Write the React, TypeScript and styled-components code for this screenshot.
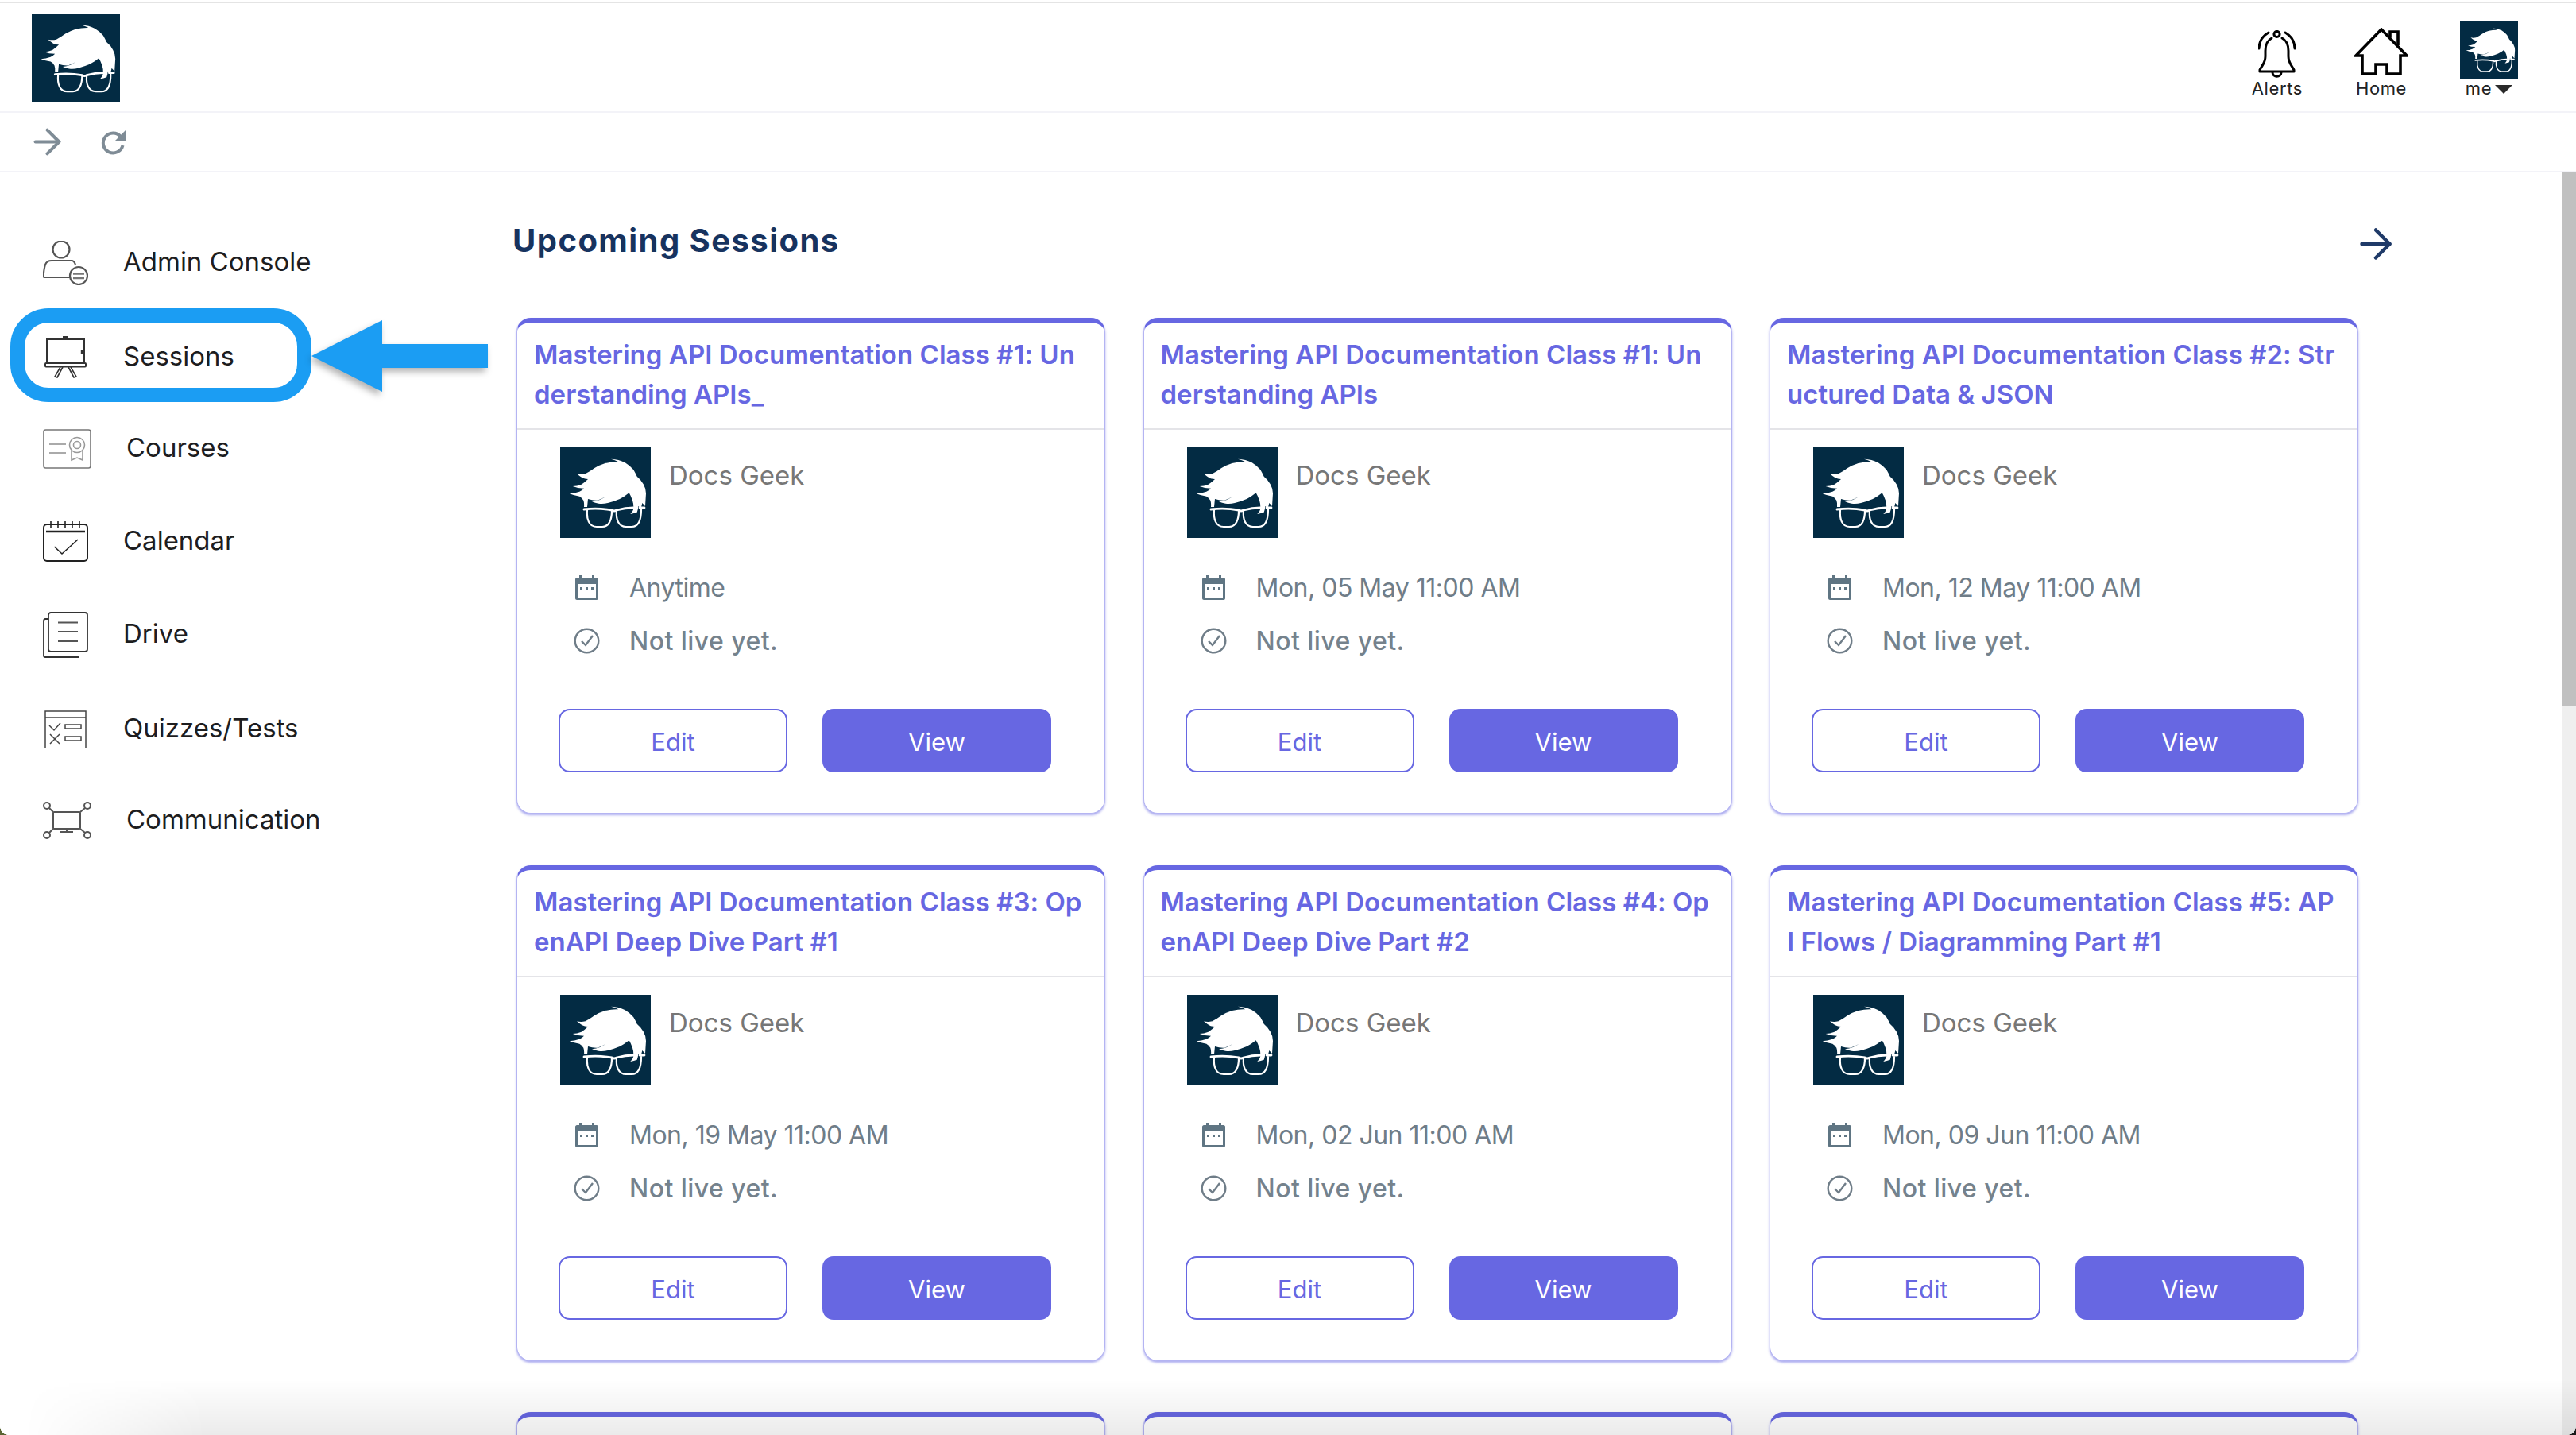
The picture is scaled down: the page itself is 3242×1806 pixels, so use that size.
import React from "react";
import styled, { createGlobalStyle } from "styled-components";
import { ArrowRight } from "lucide-react";

const GlobalStyle = createGlobalStyle`
  html, body {
    margin: 0;
    padding: 0;
    background: #fff;
  }
  * {
    box-sizing: border-box;
  }
`;

const sessions = [
  { title: "Mastering API Documentation Class #1: Understanding APIs_", when: "Anytime" },
  { title: "Mastering API Documentation Class #1: Understanding APIs", when: "Mon, 05 May 11:00 AM" },
  { title: "Mastering API Documentation Class #2: Structured Data & JSON", when: "Mon, 12 May 11:00 AM" },
  { title: "Mastering API Documentation Class #3: OpenAPI Deep Dive Part #1", when: "Mon, 19 May 11:00 AM" },
  { title: "Mastering API Documentation Class #4: OpenAPI Deep Dive Part #2", when: "Mon, 02 Jun 11:00 AM" },
  { title: "Mastering API Documentation Class #5: API Flows / Diagramming Part #1", when: "Mon, 09 Jun 11:00 AM" },
];

const LogoMark = ({ size, height }: { size: number; height?: number }) => (
  <svg width={size} height={height ?? size} viewBox="0 0 114 114" preserveAspectRatio="none" style={{ display: "block", flex: "none" }}>
    <rect width="114" height="114" fill="#032b43" />
    <path
      d="M64 14.7 Q74 15 81.7 19.3 Q88 23 92.3 28.3 Q95 33 96.7 36.7 Q102 41 105 46.7 Q108 52 108 58 L107 74 L103.3 70 L101.7 76.7 L98.3 74 Q98 79 96.7 81.7 Q93 83 88.3 84 Q92 80 92.3 76.7 Q92.5 71 91 66.7 Q89 61 86.7 57.3 Q81 62 75 65 Q68 68 60 70 Q54 71.5 48.3 70.7 Q44 70 40 68.3 Q45 68 50 66 Q54 64 57.7 61.7 Q52 65 46.7 66.7 Q41 67 35 65 L34 75 L30 75 Q30.5 70 29.3 66.7 Q27 63 24.3 61.7 Q18 61 11.7 58.3 Q18 58 24.3 55.7 Q28 54 30 51.7 Q22 51.5 15.7 49 Q21 49 26.7 46.7 Q31 44 35 40 Q31 40 27.7 38.3 Q24 36 21 33.3 Q26 34.5 31.7 33.3 Q38 30 43.3 26 Q50 22 56.7 20 Q65 18 73.3 18.3 Q69 16 64 14.7 Z"
      fill="#fff"
    />
    <g fill="none" stroke="#fff" strokeLinejoin="round" strokeLinecap="round">
      <path d="M30 78 Q48 76 65 79 Q68 81 71 79 Q82 76 92 76 M100 76 L106 76" strokeWidth="2.8" />
      <path d="M34 79 C33 90 36 100 46 100 H53 C62 100 65 90 65 80" strokeWidth="2.2" />
      <path d="M71 80 C70 90 73 100 83 100 H90 C99 100 102 90 102 78" strokeWidth="2.2" />
    </g>
  </svg>
);

const ReloadIcon = () => (
  <svg width="32" height="32" viewBox="0 0 32 32">
    <path d="M25 9 A12.5 12.5 0 1 0 27.5 20" fill="none" stroke="#7f8c96" strokeWidth="4" />
    <path d="M31 1 V15 H17 Z" fill="#7f8c96" />
  </svg>
);

const BellIcon = () => (
  <svg width="47" height="61" viewBox="0 0 47 61" fill="none" stroke="#000" strokeWidth="3" strokeLinecap="round" strokeLinejoin="round">
    <circle cx="23.5" cy="5" r="3.6" />
    <path d="M17 10 C11 13 9 19 9 26 V33 C9 41 5 44 2 50 V52 H45 V50 C42 44 38 41 38 33 V26 C38 19 36 13 30 10" />
    <path d="M18 53 C18 60 29 60 29 53" />
    <path d="M1 23 C1 14 6 7 13 3" />
    <path d="M46 23 C46 14 41 7 34 3" />
  </svg>
);

const HomeIcon = () => (
  <svg width="68" height="64" viewBox="0 0 68 64" fill="none" stroke="#000" strokeWidth="3.6" strokeLinejoin="miter">
    <path d="M10 35 H2 L34 2 L66 35 H58 V58 H41 V46 H27 V58 H10 Z" />
    <path d="M45 12 V5 H55 V22" />
  </svg>
);

const AdminIcon = () => (
  <svg width="57" height="56" viewBox="0 0 57 56" fill="none" stroke="#555" strokeWidth="2.2">
    <circle cx="23" cy="11" r="10.5" />
    <path d="M0.5 46 C1 38 2 33 3 30 C4 27 7 25 11 25 H36 C38 25 40 27 41 30 M34 46 H0.5" />
    <circle cx="45" cy="44" r="11" fill="#fff" />
    <path d="M38 41.5 H52 M38 47 H52" strokeWidth="2.4" stroke="#777" />
  </svg>
);

const BoardIcon = () => (
  <svg width="53" height="53" viewBox="0 0 53 53" fill="none" stroke="#333" strokeWidth="2">
    <path d="M24 4 V1 H29 V4" />
    <rect x="3" y="4" width="47" height="30" />
    <rect x="1" y="34" width="51" height="4.5" rx="1" fill="#fff" />
    <path d="M47 17 V23" strokeWidth="2.4" />
    <path d="M20 39 L13 51 L16 52 L23 39 M30 39 L37 52 L40 51 L33 39" strokeWidth="1.6" />
  </svg>
);

const CourseIcon = () => (
  <svg width="61" height="50" viewBox="0 0 61 50" fill="none" stroke="#999" strokeWidth="1.6">
    <rect x="1" y="1" width="59" height="48" rx="2.5" stroke="#777" />
    <path d="M8 19 H29 M8 30 H29" strokeWidth="2" stroke="#aaa" />
    <circle cx="43" cy="20" r="9.5" />
    <circle cx="43" cy="20" r="4.5" />
    <path d="M36 28 V39 L43 36 L50 39 V28" />
  </svg>
);

const CalendarIcon = () => (
  <svg width="57" height="51" viewBox="0 0 57 51" fill="none" stroke="#222" strokeWidth="1.6">
    <rect x="1" y="4" width="55" height="46" rx="4" strokeWidth="2" />
    <path d="M4 13 H53" strokeWidth="2.4" />
    <path d="M10 0 V8 M19 0 V8 M28 0 V8 M37 0 V8 M46 0 V8" />
    <path d="M14.5 32 L24 41 L44 23" />
  </svg>
);

const DriveIcon = () => (
  <svg width="57" height="58" viewBox="0 0 57 58" fill="none" stroke="#333" strokeWidth="1.8">
    <rect x="7" y="1" width="49" height="49" rx="3" />
    <path d="M7 9 H3 C1.5 9 1 10 1 11.5 V55 C1 56.5 1.5 57 3 57 H46" />
    <path d="M19 13.5 H44 M19 25 H44 M19 37 H44" stroke="#555" />
  </svg>
);

const QuizIcon = () => (
  <svg width="53" height="48" viewBox="0 0 53 48" fill="none" stroke="#444" strokeWidth="1.5">
    <rect x="1" y="1" width="51" height="47" />
    <path d="M1 9 H52" />
    <path d="M6 19 L12 25 L20 16" />
    <rect x="26" y="18" width="20" height="5" />
    <path d="M7 30 L19 42 M19 30 L7 42" />
    <rect x="26" y="33" width="20" height="5" />
  </svg>
);

const NetworkIcon = () => (
  <svg width="61" height="47" viewBox="0 0 61 47" fill="none" stroke="#555" strokeWidth="2">
    <rect x="13" y="13" width="34" height="21" rx="1" />
    <path d="M30 34 V37 M22 38 H38" />
    <circle cx="5" cy="5" r="4" />
    <circle cx="56" cy="5" r="4" />
    <circle cx="5" cy="42" r="4" />
    <circle cx="56" cy="42" r="4" />
    <path d="M8 8 L13 13 M53 8 L47 13 M8 39 L13 34 M53 39 L47 34" />
  </svg>
);

const SmallCalendar = () => (
  <svg width="33" height="33" viewBox="0 0 33 33">
    <path d="M7 1 H10 V4 H23 V1 H26 V4 H29 C30 4 31 5 31 6 V30 C31 31 30 32 29 32 H4 C3 32 2 31 2 30 V6 C2 5 3 4 4 4 H7 Z" fill="#5f7583" />
    <rect x="5" y="12" width="23" height="17" fill="#fff" />
    <rect x="8" y="16" width="3" height="3" fill="#5f7583" />
    <rect x="15" y="16" width="3" height="3" fill="#5f7583" />
    <rect x="22" y="16" width="3" height="3" fill="#5f7583" />
  </svg>
);

const CheckCircle = () => (
  <svg width="33" height="33" viewBox="0 0 33 33" fill="none" stroke="#6f7d88" strokeWidth="2.4">
    <circle cx="16.5" cy="16.5" r="14.8" />
    <path d="M10 17 L15 22 L24 10" />
  </svg>
);

const navItems = [
  { label: "Admin Console", icon: <AdminIcon />, width: 57, low: false },
  { label: "Sessions", icon: <BoardIcon />, width: 57, low: true },
  { label: "Courses", icon: <CourseIcon />, width: 61, low: false },
  { label: "Calendar", icon: <CalendarIcon />, width: 57, low: false },
  { label: "Drive", icon: <DriveIcon />, width: 57, low: false },
  { label: "Quizzes/Tests", icon: <QuizIcon />, width: 57, low: true },
  { label: "Communication", icon: <NetworkIcon />, width: 61, low: false },
];

export default function App() {
  return (
    <Page>
      <GlobalStyle />
      <Header>
        <LogoMark size={111} height={112} />
        <HeaderActions>
          <HeaderAction>
            <ActionIcon>
              <BellIcon />
            </ActionIcon>
            <ActionLabel>Alerts</ActionLabel>
          </HeaderAction>
          <HeaderAction>
            <ActionIcon>
              <HomeIcon />
            </ActionIcon>
            <ActionLabel>Home</ActionLabel>
          </HeaderAction>
          <HeaderAction>
            <ActionIcon>
              <LogoMark size={73} />
            </ActionIcon>
            <ActionLabel>
              me<Caret />
            </ActionLabel>
          </HeaderAction>
        </HeaderActions>
      </Header>
      <Toolbar>
        <ArrowRight size={51} color="#7f8c96" strokeWidth={1.9} />
        <ReloadIcon />
      </Toolbar>
      <Content>
        <Sidebar>
          {navItems.map((item) => (
            <NavRow key={item.label} $low={item.low}>
              <NavIcon $width={item.width}>{item.icon}</NavIcon>
              <NavLabel>{item.label}</NavLabel>
            </NavRow>
          ))}
          <Highlight />
          <PointerArrow width="240" height="110" viewBox="0 0 240 110">
            <path d="M2 47 L91 2 V32 H224 V62 H91 V92 Z" fill="#1b9df3" />
          </PointerArrow>
        </Sidebar>
        <Main>
          <HeadingRow>
            <Heading>Upcoming Sessions</Heading>
            <HeadingArrow>
              <ArrowRight size={60} color="#1f3a68" strokeWidth={1.8} />
            </HeadingArrow>
          </HeadingRow>
          <CardGrid>
            {sessions.map((s) => (
              <Card key={s.title}>
                <CardTitle>{s.title}</CardTitle>
                <CardBody>
                  <Host>
                    <LogoMark size={114} />
                    <HostName>Docs Geek</HostName>
                  </Host>
                  <InfoList>
                    <InfoRow>
                      <SmallCalendar />
                      <WhenText>{s.when}</WhenText>
                    </InfoRow>
                    <InfoRow>
                      <CheckCircle />
                      <StatusText>Not live yet.</StatusText>
                    </InfoRow>
                  </InfoList>
                  <Buttons>
                    <CardButton>Edit</CardButton>
                    <CardButton $primary>View</CardButton>
                  </Buttons>
                </CardBody>
              </Card>
            ))}
            <Card />
            <Card />
            <Card />
          </CardGrid>
        </Main>
        <ScrollTrack>
          <ScrollThumb />
        </ScrollTrack>
      </Content>
      <BottomFade />
      <Corner $side="left" />
      <Corner $side="right" />
    </Page>
  );
}

const Page = styled.div`
  position: relative;
  width: 3242px;
  height: 1806px;
  overflow: hidden;
  background: #fff;
  font-family: Inter, "Liberation Sans", sans-serif;
  color: #1d1d1f;
`;

const Header = styled.header`
  display: flex;
  justify-content: space-between;
  align-items: flex-start;
  height: 140px;
  margin-top: 2px;
  padding: 13px 73px 0 40px;
  border-top: 2px solid #e4e4e4;
  border-bottom: 2px solid #f3f3f8;
`;

const HeaderActions = styled.div`
  display: flex;
  gap: 65px;
  padding-top: 9px;
`;

const HeaderAction = styled.div`
  display: flex;
  flex-direction: column;
  align-items: center;
`;

const ActionIcon = styled.div`
  display: flex;
  align-items: flex-end;
  justify-content: center;
  height: 73px;
`;

const ActionLabel = styled.div`
  display: flex;
  align-items: center;
  height: 24px;
  font-size: 22px;
  letter-spacing: 0.6px;
  color: #222;
`;

const Caret = styled.i`
  width: 0;
  height: 0;
  margin-left: 4px;
  margin-top: 3px;
  border-left: 11px solid transparent;
  border-right: 11px solid transparent;
  border-top: 11px solid #2a2a2a;
`;

const Toolbar = styled.div`
  display: flex;
  align-items: center;
  gap: 42px;
  height: 75px;
  padding-left: 34px;
  border-bottom: 2px solid #f3f3f8;
`;

const Content = styled.div`
  display: flex;
  height: 1589px;
`;

const Sidebar = styled.nav`
  position: relative;
  flex: none;
  width: 645px;
  padding: 55px 0 0 54px;
`;

const NavRow = styled.div<{ $low: boolean }>`
  display: flex;
  align-items: center;
  gap: 44px;
  height: 117px;
  padding-top: ${(p) => (p.$low ? "4px" : "0")};
`;

const NavIcon = styled.div<{ $width: number }>`
  display: flex;
  justify-content: center;
  width: ${(p) => p.$width}px;
`;

const NavLabel = styled.span`
  margin-top: -3px;
  font-size: 33px;
  color: #1d1d1f;
`;

const Highlight = styled.div`
  position: absolute;
  left: 13px;
  top: 171px;
  width: 379px;
  height: 118px;
  border: 18px solid #1b9df3;
  border-radius: 48px;
`;

const PointerArrow = styled.svg`
  position: absolute;
  left: 390px;
  top: 184px;
  filter: drop-shadow(-3px 5px 4px rgba(0, 0, 0, 0.3));
`;

const Main = styled.main`
  flex: 1;
  min-width: 0;
`;

const HeadingRow = styled.div`
  display: flex;
  align-items: center;
  justify-content: space-between;
  width: 2375px;
  height: 170px;
  margin-bottom: 13px;
`;

const Heading = styled.h1`
  margin: 0;
  font-size: 40px;
  font-weight: 700;
  letter-spacing: 1.45px;
  color: #17335f;
`;

const HeadingArrow = styled.span`
  display: flex;
  margin-top: 9px;
`;

const CardGrid = styled.div`
  display: grid;
  grid-template-columns: repeat(3, 741px);
  grid-auto-rows: 624px;
  column-gap: 47.5px;
  row-gap: 64.5px;
  margin-left: 5px;
`;

const Card = styled.article`
  border: 1px solid #b4b4f2;
  border-top: 6px solid #6767e2;
  border-radius: 18px;
  background: #fff;
  box-shadow: 0 2px 3px rgba(103, 103, 226, 0.55);
`;

const CardTitle = styled.h2`
  margin: 0;
  min-height: 135px;
  padding: 15px 22px 18px 21px;
  border-bottom: 2px solid #e4e4e8;
  font-size: 33px;
  font-weight: 600;
  line-height: 50px;
  letter-spacing: 0.03px;
  word-break: break-all;
  color: #6767e2;
`;

const CardBody = styled.div`
  padding: 22px 0 0 54px;
`;

const Host = styled.div`
  display: flex;
  gap: 23px;
`;

const HostName = styled.span`
  margin-top: 15px;
  font-size: 33px;
  line-height: 40px;
  color: #777;
`;

const InfoList = styled.div`
  margin: 29px 0 52px 17px;
`;

const InfoRow = styled.div`
  display: flex;
  align-items: center;
  gap: 37px;
  height: 67px;
  font-size: 32px;
  color: #6f7d88;
`;

const WhenText = styled.span`
  letter-spacing: -0.5px;
`;

const StatusText = styled.span`
  font-weight: 500;
  letter-spacing: 0.45px;
  color: #75828c;
`;

const Buttons = styled.div`
  display: flex;
  gap: 44px;
  margin-left: -2px;
`;

const CardButton = styled.button<{ $primary?: boolean }>`
  width: 288px;
  height: 80px;
  padding: 3px 0 0;
  border: 2px solid #6767e2;
  border-radius: 14px;
  background: ${(p) => (p.$primary ? "#6767e2" : "#fff")};
  color: ${(p) => (p.$primary ? "#fff" : "#6767e2")};
  font-family: inherit;
  font-size: 31px;
`;

const ScrollTrack = styled.div`
  flex: none;
  width: 18px;
  background: #efefef;
`;

const ScrollThumb = styled.div`
  height: 672px;
  background: #c0c0c0;
`;

const BottomFade = styled.div`
  position: absolute;
  left: 0;
  right: 0;
  bottom: 0;
  height: 70px;
  pointer-events: none;
  background: linear-gradient(to bottom, rgba(0, 0, 0, 0), rgba(0, 0, 0, 0.08));
  mask-image: linear-gradient(to right, transparent 30px, #000 260px);
`;

const Corner = styled.div<{ $side: "left" | "right" }>`
  position: absolute;
  bottom: 0;
  ${(p) => p.$side}: 0;
  width: 10px;
  height: 10px;
  background: ${(p) =>
    p.$side === "left"
      ? "radial-gradient(circle at top right, transparent 9.5px, #5a6433 10px)"
      : "radial-gradient(circle at top left, transparent 9.5px, #1a1a1a 10px)"};
`;
